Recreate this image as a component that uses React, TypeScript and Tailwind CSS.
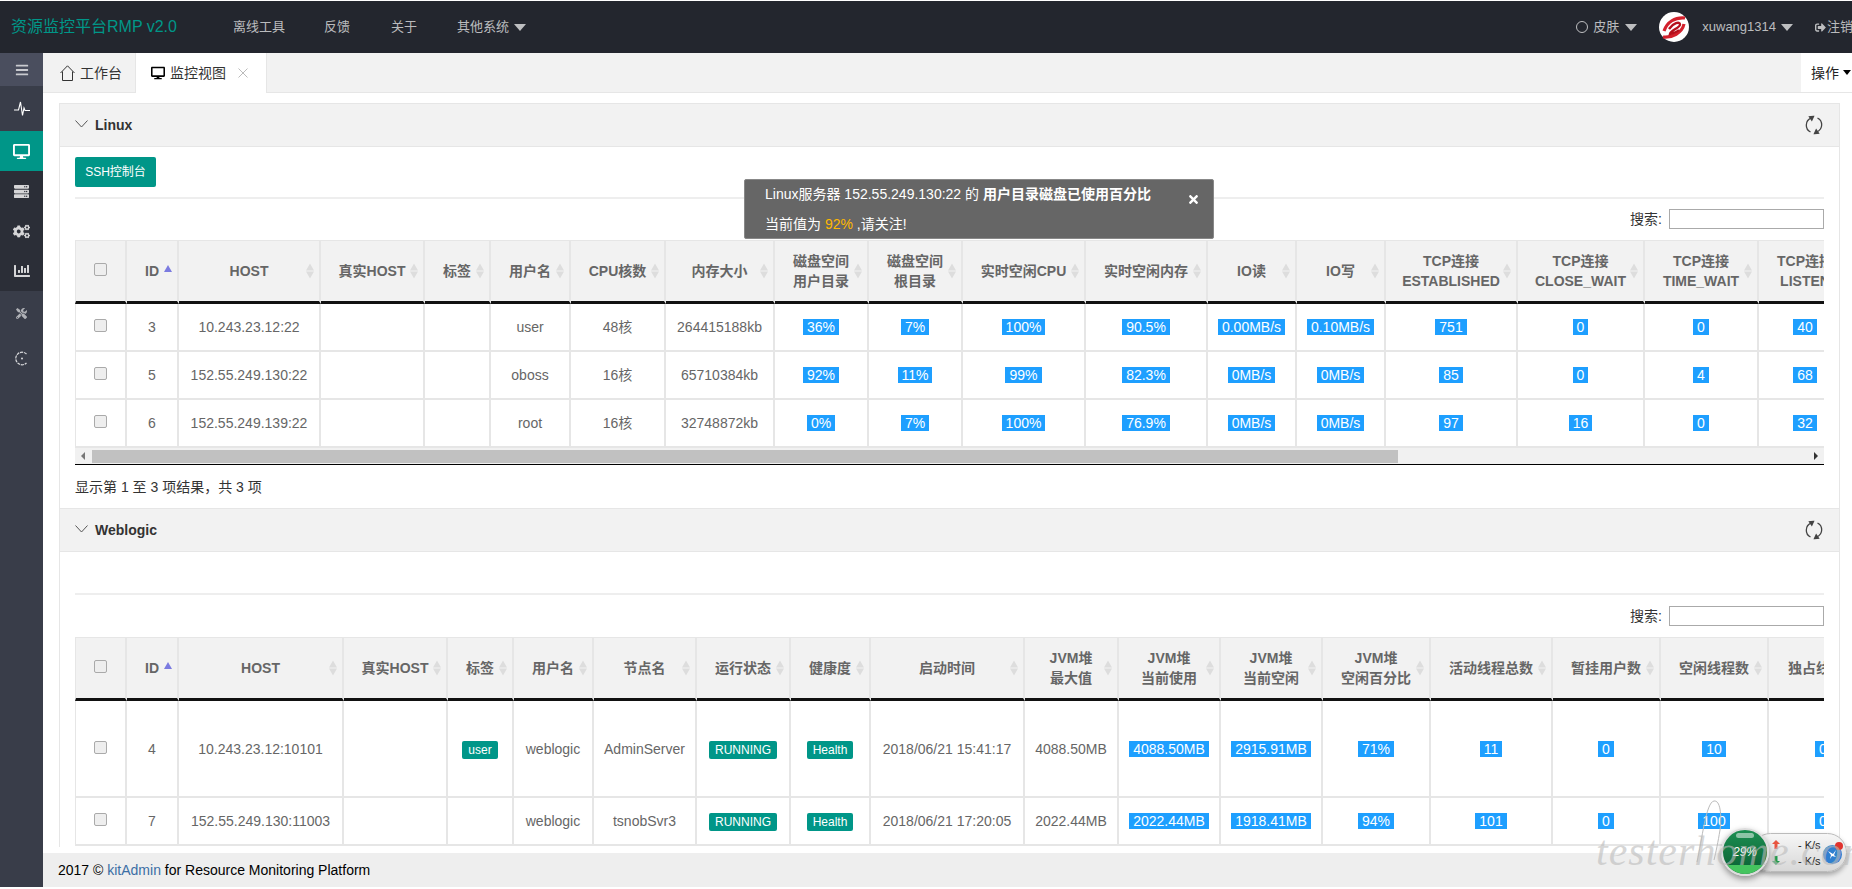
import type { ReactNode } from 'react'
import { FaBars, FaChartBar, FaCogs, FaDesktop, FaServer, FaSignOutAlt, FaTimes, FaTools } from 'react-icons/fa'

type Col = { w: string; label: ReactNode }

const linuxCols: Col[] = [
  { w: 'w-[52px]', label: 'check' },
  { w: 'w-[52px]', label: 'ID' },
  { w: 'w-[142px]', label: 'HOST' },
  { w: 'w-[104px]', label: '真实HOST' },
  { w: 'w-[66px]', label: '标签' },
  { w: 'w-[80px]', label: '用户名' },
  { w: 'w-[95px]', label: 'CPU核数' },
  { w: 'w-[109px]', label: '内存大小' },
  { w: 'w-[94px]', label: <>磁盘空间<br />用户目录</> },
  { w: 'w-[94px]', label: <>磁盘空间<br />根目录</> },
  { w: 'w-[123px]', label: '实时空闲CPU' },
  { w: 'w-[122px]', label: '实时空闲内存' },
  { w: 'w-[89px]', label: 'IO读' },
  { w: 'w-[89px]', label: 'IO写' },
  { w: 'w-[132px]', label: <>TCP连接<br />ESTABLISHED</> },
  { w: 'w-[127px]', label: <>TCP连接<br />CLOSE_WAIT</> },
  { w: 'w-[114px]', label: <>TCP连接<br />TIME_WAIT</> },
  { w: 'w-[94px]', label: <>TCP连接<br />LISTEN</> },
]

const weblogicCols: Col[] = [
  { w: 'w-[52px]', label: 'check' },
  { w: 'w-[52px]', label: 'ID' },
  { w: 'w-[165px]', label: 'HOST' },
  { w: 'w-[104px]', label: '真实HOST' },
  { w: 'w-[66px]', label: '标签' },
  { w: 'w-[80px]', label: '用户名' },
  { w: 'w-[103px]', label: '节点名' },
  { w: 'w-[94px]', label: '运行状态' },
  { w: 'w-[80px]', label: '健康度' },
  { w: 'w-[154px]', label: '启动时间' },
  { w: 'w-[94px]', label: <>JVM堆<br />最大值</> },
  { w: 'w-[102px]', label: <>JVM堆<br />当前使用</> },
  { w: 'w-[102px]', label: <>JVM堆<br />当前空闲</> },
  { w: 'w-[108px]', label: <>JVM堆<br />空闲百分比</> },
  { w: 'w-[122px]', label: '活动线程总数' },
  { w: 'w-[108px]', label: '暂挂用户数' },
  { w: 'w-[108px]', label: '空闲线程数' },
  { w: 'w-[110px]', label: '独占线程数' },
]

const linuxRows = [
  ['3', '10.243.23.12:22', '', '', 'user', '48核', '264415188kb', '36%', '7%', '100%', '90.5%', '0.00MB/s', '0.10MB/s', '751', '0', '0', '40'],
  ['5', '152.55.249.130:22', '', '', 'oboss', '16核', '65710384kb', '92%', '11%', '99%', '82.3%', '0MB/s', '0MB/s', '85', '0', '4', '68'],
  ['6', '152.55.249.139:22', '', '', 'root', '16核', '32748872kb', '0%', '7%', '100%', '76.9%', '0MB/s', '0MB/s', '97', '16', '0', '32'],
]

const weblogicRows = [
  { h: 'h-[97px]', cells: ['4', '10.243.23.12:10101', '', 'user', 'weblogic', 'AdminServer', 'RUNNING', 'Health', '2018/06/21 15:41:17', '4088.50MB', '4088.50MB', '2915.91MB', '71%', '11', '0', '10', '0'] },
  { h: 'h-[48px]', cells: ['7', '152.55.249.130:11003', '', '', 'weblogic', 'tsnobSvr3', 'RUNNING', 'Health', '2018/06/21 17:20:05', '2022.44MB', '2022.44MB', '1918.41MB', '94%', '101', '0', '100', '0'] },
]

function Caret({ className }: { className: string }) {
  return <span className={`inline-block shrink-0 w-0 h-0 border-x-[6px] border-x-transparent border-t-[7px] ${className}`} />
}

function Checkbox() {
  return <input type="checkbox" className="appearance-none block mx-auto -mt-[3px] w-[13px] h-[13px] rounded-[2px] border border-[#aaa] bg-[#eee]" />
}

function Bar({ children }: { children: ReactNode }) {
  return <span className="bg-[#1E9FFF] text-white px-1">{children}</span>
}

function Badge({ children }: { children: ReactNode }) {
  return <span className="inline-block h-[18px] leading-[18px] px-[6px] text-xs rounded-[2px] bg-[#009688] text-white">{children}</span>
}

function SortIcon() {
  return (
    <span className="absolute right-[5px] top-1/2 -translate-y-1/2 flex flex-col gap-[1px]">
      <span className="w-0 h-0 border-x-[4px] border-x-transparent border-b-[7px] border-b-[#ddd]" />
      <span className="w-0 h-0 border-x-[4px] border-x-transparent border-t-[7px] border-t-[#ddd]" />
    </span>
  )
}

function HeaderCell({ label }: { label: ReactNode }) {
  const base = 'relative h-[64px] p-0 text-center font-bold leading-5 text-[#666] bg-[#f2f2f2] border-t border-t-[#e6e6e6] border-r-2 border-r-[#e6e6e6] border-b-[3px] border-b-[#111]'
  if (label === 'check') {
    return <th className={`${base} border-l border-l-[#e6e6e6]`}><Checkbox /></th>
  }
  if (label === 'ID') {
    return (
      <th className={base}>
        ID
        <span className="absolute right-[5px] top-[24px] w-0 h-0 border-x-[4px] border-x-transparent border-b-[7px] border-b-[#7b7be0]" />
      </th>
    )
  }
  return <th className={base}>{label}<SortIcon /></th>
}

function DataTable({ cols, width, children }: { cols: Col[]; width: string; children: ReactNode }) {
  return (
    <table className={`table-fixed border-separate border-spacing-0 text-sm ${width}`}>
      <colgroup>
        {cols.map((c, i) => <col key={i} className={c.w} />)}
      </colgroup>
      <thead>
        <tr>{cols.map((c, i) => <HeaderCell key={i} label={c.label} />)}</tr>
      </thead>
      <tbody className="text-[#666] text-center">{children}</tbody>
    </table>
  )
}

const cellCls = 'p-0 whitespace-nowrap overflow-hidden border-r-2 border-r-[#e6e6e6] border-b-2 border-b-[#e6e6e6]'

function LinuxTable() {
  return (
    <DataTable cols={linuxCols} width="w-[1778px]">
      {linuxRows.map((row) => (
        <tr key={row[0]} className="h-[48px]">
          <td className={`${cellCls} border-l border-l-[#e6e6e6]`}><Checkbox /></td>
          {row.map((v, i) => (
            <td key={i} className={cellCls}>{i >= 7 ? <Bar>{v}</Bar> : v}</td>
          ))}
        </tr>
      ))}
    </DataTable>
  )
}

function WeblogicTable() {
  return (
    <DataTable cols={weblogicCols} width="w-[1804px]">
      {weblogicRows.map((row) => (
        <tr key={row.cells[0]} className={row.h}>
          <td className={`${cellCls} border-l border-l-[#e6e6e6]`}><Checkbox /></td>
          {row.cells.map((v, i) => (
            <td key={i} className={cellCls}>
              {i === 3 && v ? <Badge>{v}</Badge> : i === 6 || i === 7 ? <Badge>{v}</Badge> : i >= 10 ? <Bar>{v}</Bar> : v}
            </td>
          ))}
        </tr>
      ))}
    </DataTable>
  )
}

function RefreshIcon() {
  return (
    <svg width="20" height="20" viewBox="0 0 20 20" fill="none" stroke="#444" strokeWidth="1.3">
      <path d="M7 3.2A7.6 7.6 0 0 0 6.5 17" />
      <path d="M13 16.8A7.6 7.6 0 0 0 13.5 3" />
      <path d="M9.5 1.5L5.5 1.8 7.8 5.2Z" fill="#444" />
      <path d="M10.5 18.5L14.5 18.2 12.2 14.8Z" fill="#444" />
    </svg>
  )
}

function PanelHeader({ title }: { title: string }) {
  return (
    <div className="h-[44px] flex items-center pl-[15px] pr-[15px] bg-[#f2f2f2] border-y border-[#e6e6e6]">
      <svg width="13" height="8" viewBox="0 0 13 8" fill="none" stroke="#555" strokeWidth="1" className="-mt-[3px]">
        <path d="M0.5 0.5L6.5 7 12.5 0.5" />
      </svg>
      <span className="ml-[7px] text-sm font-bold text-[#333]">{title}</span>
      <span className="ml-auto"><RefreshIcon /></span>
    </div>
  )
}

function SearchRow({ className }: { className: string }) {
  return (
    <div className={`h-[20px] flex justify-end items-center text-sm text-[#333] ${className}`}>
      <span>搜索:</span>
      <input className="ml-[7px] w-[155px] h-[20px] border border-[#aaa] bg-white" />
    </div>
  )
}

function Scrollbar() {
  return (
    <div className="h-[17px] bg-[#f1f1f1] border-b border-b-black flex items-center">
      <span className="ml-[6px] w-0 h-0 border-y-[4px] border-y-transparent border-r-[4px] border-r-[#777]" />
      <span className="ml-[7px] h-[13px] w-[1306px] bg-[#c1c1c1]" />
      <span className="ml-auto mr-[6px] w-0 h-0 border-y-[4px] border-y-transparent border-l-[4px] border-l-[#333]" />
    </div>
  )
}

function SideItem({ className, children }: { className: string; children: ReactNode }) {
  return <div className={`flex items-center justify-center ${className}`}>{children}</div>
}

function Sidebar() {
  return (
    <aside className="w-[43px] shrink-0 bg-[#393D49] flex flex-col text-white/80">
      <SideItem className="h-[33px] bg-[#4a4e5e] text-white/70"><FaBars size={14} /></SideItem>
      <SideItem className="h-[45px] text-white">
        <svg width="16" height="18" viewBox="0 0 16 18" fill="none" stroke="currentColor" strokeWidth="1.1">
          <path d="M0 10H4.5L6.5 2 8.5 15.5 10 8 11 10.5H16" />
        </svg>
      </SideItem>
      <SideItem className="h-[40px] bg-[#009688] text-white"><FaDesktop size={17} /></SideItem>
      <div className="bg-[#2B2E37]">
        <SideItem className="h-[40px]"><FaServer size={15} /></SideItem>
        <SideItem className="h-[40px]"><FaCogs size={17} /></SideItem>
        <SideItem className="h-[40px]"><FaChartBar size={16} /></SideItem>
      </div>
      <SideItem className="h-[45px] text-white/60"><FaTools size={11} /></SideItem>
      <SideItem className="h-[45px]">
        <svg width="15" height="15" viewBox="0 0 15 15" fill="none" stroke="currentColor" strokeWidth="1.2">
          <path d="M12.5 3A6.3 6.3 0 1 0 12.5 12" strokeDasharray="3 0.8" />
          <circle cx="8" cy="7.5" r="1" fill="currentColor" stroke="none" />
        </svg>
      </SideItem>
    </aside>
  )
}

function TopBar() {
  return (
    <header className="h-[52px] shrink-0 bg-[#23262E] flex items-center text-[13px] text-white/70">
      <span className="ml-[11px] w-[222px] text-base text-[#009688]">资源监控平台RMP v2.0</span>
      <span className="w-[91px]">离线工具</span>
      <span className="w-[67px]">反馈</span>
      <span className="w-[66px]">关于</span>
      <span>其他系统</span>
      <Caret className="ml-[5px] border-t-white/70" />
      <svg width="14" height="14" viewBox="0 0 14 14" fill="none" stroke="currentColor" className="ml-auto">
        <circle cx="7" cy="7" r="5.5" />
      </svg>
      <span className="ml-[4px]">皮肤</span>
      <Caret className="ml-[6px] border-t-white/70" />
      <svg width="30" height="30" viewBox="0 0 30 30" fill="none" className="ml-[22px]">
        <circle cx="15" cy="15" r="15" fill="#fff" />
        <path d="M5 19C8 10 16 5 26 6" stroke="#d3202c" strokeWidth="3.2" />
        <path d="M4 25C13 26 23 21 25 12" stroke="#d3202c" strokeWidth="3.2" />
        <path d="M10 17C14 11 21 9 21 12.5 21 16 12 18 11 22 15 21 18 20 20 18" stroke="#b5101c" strokeWidth="2.4" />
      </svg>
      <span className="ml-[13px]">xuwang1314</span>
      <Caret className="ml-[5px] border-t-white/70" />
      <FaSignOutAlt size={11} className="ml-[22px]" />
      <span className="ml-px w-[25px] whitespace-nowrap">注销</span>
    </header>
  )
}

function Tabs() {
  return (
    <div className="h-[40px] shrink-0 bg-[#f2f2f2] border-b border-[#e6e6e6] flex text-sm text-[#333]">
      <div className="w-[93px] h-[39px] flex items-center pl-[17px] border-r border-[#e6e6e6]">
        <svg width="15" height="16" viewBox="0 0 15 16" fill="none" stroke="#333" strokeWidth="1">
          <path d="M0.5 8L7.5 0.8 14.5 8M2.5 6.5V15.5H12.5V6.5" />
        </svg>
        <span className="ml-[5px]">工作台</span>
      </div>
      <div className="w-[131px] h-[40px] bg-white flex items-center pl-[15px] border-r border-[#e6e6e6]">
        <FaDesktop size={14} className="text-black" />
        <span className="ml-[5px]">监控视图</span>
        <svg width="10" height="10" viewBox="0 0 10 10" stroke="#bbb" className="ml-[12px]">
          <path d="M0.5 0.5L9.5 9.5M9.5 0.5L0.5 9.5" />
        </svg>
      </div>
      <div className="ml-auto w-[51px] h-[39px] bg-white flex items-center pl-[10px]">
        <span className="text-[#222] whitespace-nowrap">操作</span>
        <span className="ml-[4px] shrink-0 w-0 h-0 border-x-[4px] border-x-transparent border-t-[5px] border-t-black" />
      </div>
    </div>
  )
}

function Toast() {
  return (
    <div className="absolute left-[744px] top-[179px] w-[470px] h-[60px] pl-[20px] bg-[#666] border border-[#888] rounded-[2px] text-sm text-white">
      <p className="h-[29px] leading-[29px]">Linux服务器 152.55.249.130:22 的 <b>用户目录磁盘已使用百分比</b></p>
      <p className="h-[30px] leading-[30px]">当前值为 <span className="text-[#FFB800]">92%</span> ,请关注!</p>
      <FaTimes size={13} className="absolute right-[13px] top-[13px]" />
    </div>
  )
}

function NetWidget() {
  return (
    <div className="absolute left-[1721px] top-[828px] w-[127px] h-[48px] flex items-center">
      <div className="absolute left-[30px] top-[5px] w-[96px] h-[39px] rounded-full bg-linear-to-b from-[#f6f6f6] to-[#d8d8d8] border border-[#bbb] shadow-[0_3px_5px_rgba(0,0,0,0.3)]" />
      <svg width="8" height="9" viewBox="0 0 8 9" className="absolute left-[51px] top-[12px]" fill="#e8553f">
        <path d="M4 0L8 4H5.5V9H2.5V4H0Z" />
      </svg>
      <svg width="8" height="9" viewBox="0 0 8 9" className="absolute left-[51px] top-[28px]" fill="#1d9a50">
        <path d="M4 9L8 5H5.5V0H2.5V5H0Z" />
      </svg>
      <span className="absolute left-[77px] top-[10px] text-[11px] leading-[14px] text-[#222] whitespace-nowrap">- K/s</span>
      <span className="absolute left-[77px] top-[26px] text-[11px] leading-[14px] text-[#222] whitespace-nowrap">- K/s</span>
      <span className="absolute left-[102px] top-[17px] w-[19px] h-[19px] rounded-full bg-[#2f7fd0] flex items-center justify-center">
        <svg width="11" height="11" viewBox="0 0 11 11" fill="#fff">
          <path d="M1 2L6 5 9 1 7 6 9 8 5 7 3 10 4 6Z" />
        </svg>
      </span>
      <span className="absolute left-[114px] top-[14px] w-[8px] h-[8px] rounded-full bg-[#e0332e]" />
      <div className="relative w-[48px] h-[48px] rounded-full border-[2px] border-[#ddd] bg-linear-to-b from-[#1c8f52] to-[#0a5f33] overflow-hidden flex items-center justify-center shadow-[0_3px_6px_rgba(0,0,0,0.4)]">
        <span className="absolute top-[3px] left-[13px] w-[18px] h-[5px] rounded-full bg-white/50" />
        <span className="absolute inset-x-0 bottom-0 h-[9px] bg-[#45c45f]" />
        <span className="relative text-xs text-white italic">29%</span>
      </div>
    </div>
  )
}

function Watermark() {
  return (
    <>
      <span className="absolute left-[1596px] top-[826px] text-[42px] leading-[50px] tracking-[1px] italic text-[#bbb]/60 whitespace-nowrap [font-family:'Liberation_Serif',serif]">testerhome.com</span>
      <svg width="30" height="66" viewBox="0 0 30 66" fill="none" stroke="#bbb" className="absolute left-[1696px] top-[800px]">
        <path d="M1 62C6 40 10 2 18 1 24 0 26 14 24 30 22 42 20 52 18 60" />
      </svg>
    </>
  )
}

export default function App() {
  return (
    <div className="relative w-[1852px] h-[889px] pt-px pb-[2px] overflow-hidden bg-white flex flex-col text-sm [font-family:'Liberation_Sans','Noto_Sans_CJK_SC',sans-serif]">
      <TopBar />
      <div className="flex-1 flex min-h-0">
        <Sidebar />
        <main className="flex-1 min-w-0 flex flex-col">
          <Tabs />
          <div className="h-[754px] shrink-0 overflow-hidden pt-[10px] pl-[16px] pr-[12px]">
            <div className="border-x border-[#e6e6e6] h-full">
              <PanelHeader title="Linux" />
              <div className="px-[15px] pt-[10px] h-[361px]">
                <button className="w-[81px] h-[30px] bg-[#009688] text-white rounded-[2px] text-xs">SSH控制台</button>
                <div className="mt-[10px] h-[2px] bg-[#eee]" />
                <SearchRow className="mt-[10px]" />
                <div className="mt-[11px] overflow-hidden">
                  <LinuxTable />
                </div>
                <Scrollbar />
                <p className="mt-[12px] text-[#333] leading-5">显示第 1 至 3 项结果，共 3 项</p>
              </div>
              <PanelHeader title="Weblogic" />
              <div className="px-[15px] pt-[41px]">
                <div className="h-[2px] bg-[#eee]" />
                <SearchRow className="mt-[11px]" />
                <div className="mt-[11px] overflow-hidden">
                  <WeblogicTable />
                </div>
              </div>
            </div>
          </div>
          <footer className="mt-[6px] h-[35px] bg-[#eee] flex items-center pl-[15px] text-sm text-black">
            2017 ©&nbsp;<span className="text-[#3b6ea5]">kitAdmin</span>&nbsp;for Resource Monitoring Platform
          </footer>
        </main>
      </div>
      <Toast />
      <NetWidget />
      <Watermark />
    </div>
  )
}
